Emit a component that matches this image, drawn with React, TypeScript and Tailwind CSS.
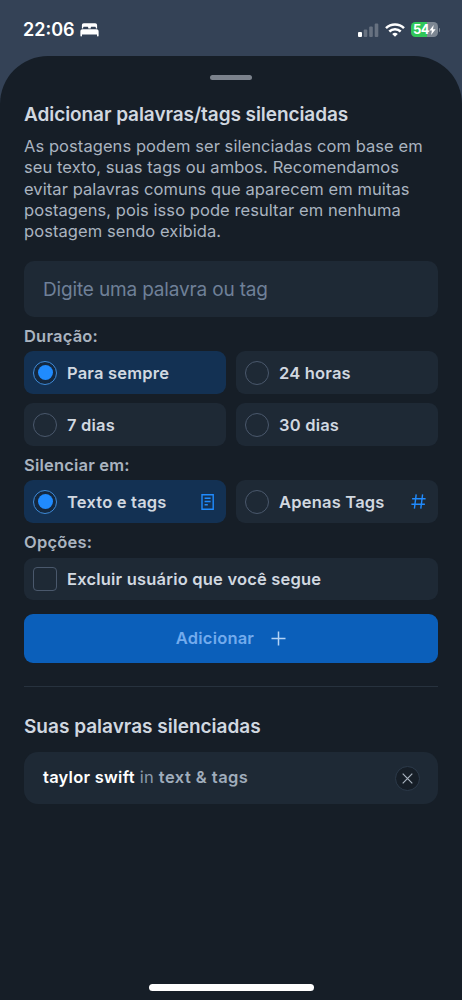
import { useState } from 'react';
import type { ReactNode } from 'react';
import { clsx } from 'clsx';

function BedIcon() {
  return (
    <svg width="19" height="14" viewBox="0 0 20 14" preserveAspectRatio="none" fill="white">
      <path d="M2 5.600V2.200C2 .9 2.800.2 4 .2h12c1.200 0 2 .7 2 2v3.400h-1.300V4.800c0-.7-.4-1.100-1.100-1.100h-3.200c-.7 0-1.100.4-1.100 1.100v.8H8.700v-.8c0-.7-.4-1.100-1.100-1.100H4.400c-.7 0-1.100.4-1.100 1.100v.8z" />
      <path d="M.4 8.500c0-1.400.8-2.200 2.200-2.200h14.800c1.400 0 2.200.8 2.200 2.200v4.300c0 .4-.3.700-.7.700h-.3c-.4 0-.7-.3-.7-.7v-1.200H2.100v1.200c0 .4-.3.700-.7.700h-.3c-.4 0-.7-.3-.7-.7z" />
    </svg>
  );
}

function SignalIcon() {
  return (
    <svg width="21" height="14" viewBox="0 0 21 14" fill="white">
      <rect x="0" y="9" width="4" height="5" rx="1" />
      <rect x="5.700" y="6.500" width="3.600" height="7.500" rx="1" opacity=".25" />
      <rect x="11.200" y="3.500" width="3.600" height="10.500" rx="1" opacity=".25" />
      <rect x="16.700" y="0.500" width="3.600" height="13.500" rx="1" opacity=".25" />
    </svg>
  );
}

function WifiIcon() {
  return (
    <svg width="20" height="14" viewBox="0 0 20 14" fill="none" stroke="white" strokeWidth="2.500">
      <path d="M1 5.200a12.900 12.900 0 0 1 18 0" />
      <path d="M4.300 8.500a8.200 8.200 0 0 1 11.400 0" />
      <path d="M10 13.800 7.200 11a4 4 0 0 1 5.600 0z" fill="white" stroke="none" />
    </svg>
  );
}

function Battery() {
  return (
    <div className="flex items-center gap-px">
      <div className="flex h-[15px] w-[27px] items-center justify-center rounded-[4.500px] bg-[linear-gradient(to_right,#31c759_58%,#7d8793_58%)]">
        <span className="text-[13px] font-bold leading-[15px] tracking-[-0.5px] text-white">54</span>
        <svg width="7" height="10" viewBox="0 0 7 10" fill="white">
          <path d="M4.700 0 .4 5.600h2.500L2.100 10l4.500-5.800H4z" />
        </svg>
      </div>
      <div className="h-1 w-px rounded-r bg-[#7d8793]" />
    </div>
  );
}

function PageTextIcon() {
  return (
    <svg width="13" height="16" viewBox="0 0 13 16" fill="none" stroke="#208bfe" strokeWidth="1.400">
      <path d="M1 .8h11.200v14.400H1zM3.600 4.300h6M3.600 7.500h6M3.600 10.700h3.200" />
    </svg>
  );
}

function HashIcon() {
  return (
    <svg width="15" height="15" viewBox="0 0 15 15" fill="none" stroke="#208bfe" strokeWidth="1.400">
      <path d="M5.200.3 3.400 14.600M11.600.3 9.800 14.600M1.100 4.700h13.500M.4 10.200h13.500" />
    </svg>
  );
}

interface OptionProps {
  label: string;
  selected: boolean;
  onSelect: () => void;
  square?: boolean;
  icon?: ReactNode;
}

function Option({ label, selected, onSelect, square, icon }: OptionProps) {
  return (
    <button
      onClick={onSelect}
      className={clsx(
        'flex h-[42.500px] w-full items-center rounded-[9px] pl-[9px] pr-[12px]',
        selected ? 'bg-[#133153]' : 'bg-[#1e2935]'
      )}
    >
      <span
        className={clsx(
          'flex size-6 shrink-0 items-center justify-center border',
          square ? 'rounded-[4px]' : 'rounded-full',
          selected ? 'border-[#3e8ad8] bg-[#14283f]' : 'border-[#4a586c]'
        )}
      >
        {selected && <span className="size-[15px] rounded-full bg-[#208bfe]" />}
      </span>
      <span className="ml-[10px] mt-px whitespace-nowrap text-[16.500px] font-semibold tracking-[0.2px] text-[#d1d8e0]">
        {label}
      </span>
      {icon && <span className="ml-auto">{icon}</span>}
    </button>
  );
}

function GroupLabel({ children }: { children: ReactNode }) {
  return (
    <div className="text-[16.500px] font-semibold leading-[20px] tracking-[0.2px] text-[#aab4c0]">{children}</div>
  );
}

export default function App() {
  const [duration, setDuration] = useState('Para sempre');
  const [target, setTarget] = useState('Texto e tags');
  const [exclude, setExclude] = useState(false);

  return (
    <div className="flex h-[1000px] w-[462px] flex-col overflow-hidden bg-[#344256] font-['Inter',sans-serif]">
      <header className="flex h-14 shrink-0 items-center justify-between pl-[23px] pr-[22px] pt-[3px]">
        <div className="flex items-center gap-[5px]">
          <span className="text-[18px] font-semibold leading-none text-white">22:06</span>
          <BedIcon />
        </div>
        <div className="flex items-center gap-[6px]">
          <SignalIcon />
          <WifiIcon />
          <Battery />
        </div>
      </header>

      <main className="flex grow flex-col rounded-t-[48px] bg-[#161e27] px-6 pt-[19px]">
        <div className="mx-auto h-[5px] w-[42px] shrink-0 rounded-full bg-[#7b828c]" />

        <h1 className="mt-[23px] whitespace-nowrap text-[19px] font-semibold leading-6 tracking-[-0.07px] text-[#d1d8e0]">
          Adicionar palavras/tags silenciadas
        </h1>
        <p className="mt-[9px] whitespace-nowrap text-[16.500px] leading-[21.250px] tracking-[0.07px] text-[#aab4c0]">
          As postagens podem ser silenciadas com base em
          <br />
          seu texto, suas tags ou ambos. Recomendamos
          <br />
          evitar palavras comuns que aparecem em muitas
          <br />
          postagens, pois isso pode resultar em nenhuma
          <br />
          postagem sendo exibida.
        </p>

        <input
          placeholder="Digite uma palavra ou tag"
          className="mt-[19px] h-14 w-full shrink-0 rounded-[10px] bg-[#1e2935] px-[19px] text-[19px] tracking-[-0.16px] text-white outline-none placeholder:text-[#6f8098]"
        />

        <div className="mt-[9px]">
          <GroupLabel>Duração:</GroupLabel>
          <div className="mt-[5px] grid grid-cols-2 gap-x-[10px] gap-y-[9.500px]">
            {['Para sempre', '24 horas', '7 dias', '30 dias'].map(d => (
              <Option key={d} label={d} selected={duration === d} onSelect={() => setDuration(d)} />
            ))}
          </div>
        </div>

        <div className="mt-[9.500px]">
          <GroupLabel>Silenciar em:</GroupLabel>
          <div className="mt-[5px] grid grid-cols-2 gap-x-[10px]">
            <Option
              label="Texto e tags"
              selected={target === 'Texto e tags'}
              onSelect={() => setTarget('Texto e tags')}
              icon={<PageTextIcon />}
            />
            <Option
              label="Apenas Tags"
              selected={target === 'Apenas Tags'}
              onSelect={() => setTarget('Apenas Tags')}
              icon={<HashIcon />}
            />
          </div>
        </div>

        <div className="mt-[9.500px]">
          <GroupLabel>Opções:</GroupLabel>
          <div className="mt-[5.500px]">
            <Option
              label="Excluir usuário que você segue"
              selected={exclude}
              onSelect={() => setExclude(!exclude)}
              square
            />
          </div>
        </div>

        <button className="mt-[14px] flex h-[48.500px] w-full shrink-0 items-center justify-center gap-[17px] rounded-[9px] bg-[#0b5fba]">
          <span className="text-[16.500px] font-semibold tracking-[0.2px] text-[#73abed]">Adicionar</span>
          <svg width="15" height="15" viewBox="0 0 15 15" fill="none" stroke="#b5d3f5" strokeWidth="1.500">
            <path d="M7.500.5v14M.5 7.500h14" />
          </svg>
        </button>

        <div className="mt-[23.500px] h-px shrink-0 bg-[#27323e]" />

        <h2 className="mt-[28px] whitespace-nowrap text-[19px] font-semibold leading-6 text-[#d1d8e0]">
          Suas palavras silenciadas
        </h2>
        <div className="mt-[13px] flex h-[52px] shrink-0 items-center justify-between rounded-[14px] bg-[#1e2935] pl-[19px] pr-[18px]">
          <p className="mb-px whitespace-nowrap text-[16.500px] tracking-[0.25px] text-[#8b9aac]">
            <span className="font-semibold text-white">taylor swift</span> in{' '}
            <span className="font-semibold tracking-[0.45px] text-[#a0adbc]">text &amp; tags</span>
          </p>
          <button className="flex size-[25px] items-center justify-center rounded-full border border-[#2c3a4a] bg-[#161e27]">
            <svg width="11" height="11" viewBox="0 0 11 11" fill="none" stroke="#a9b3bf" strokeWidth="1.200">
              <path d="m.7.7 9.600 9.600M10.300.7.7 10.300" />
            </svg>
          </button>
        </div>

        <div className="mx-auto mb-[9px] mt-auto h-[7px] w-[165px] shrink-0 rounded-full bg-white" />
      </main>
    </div>
  );
}
